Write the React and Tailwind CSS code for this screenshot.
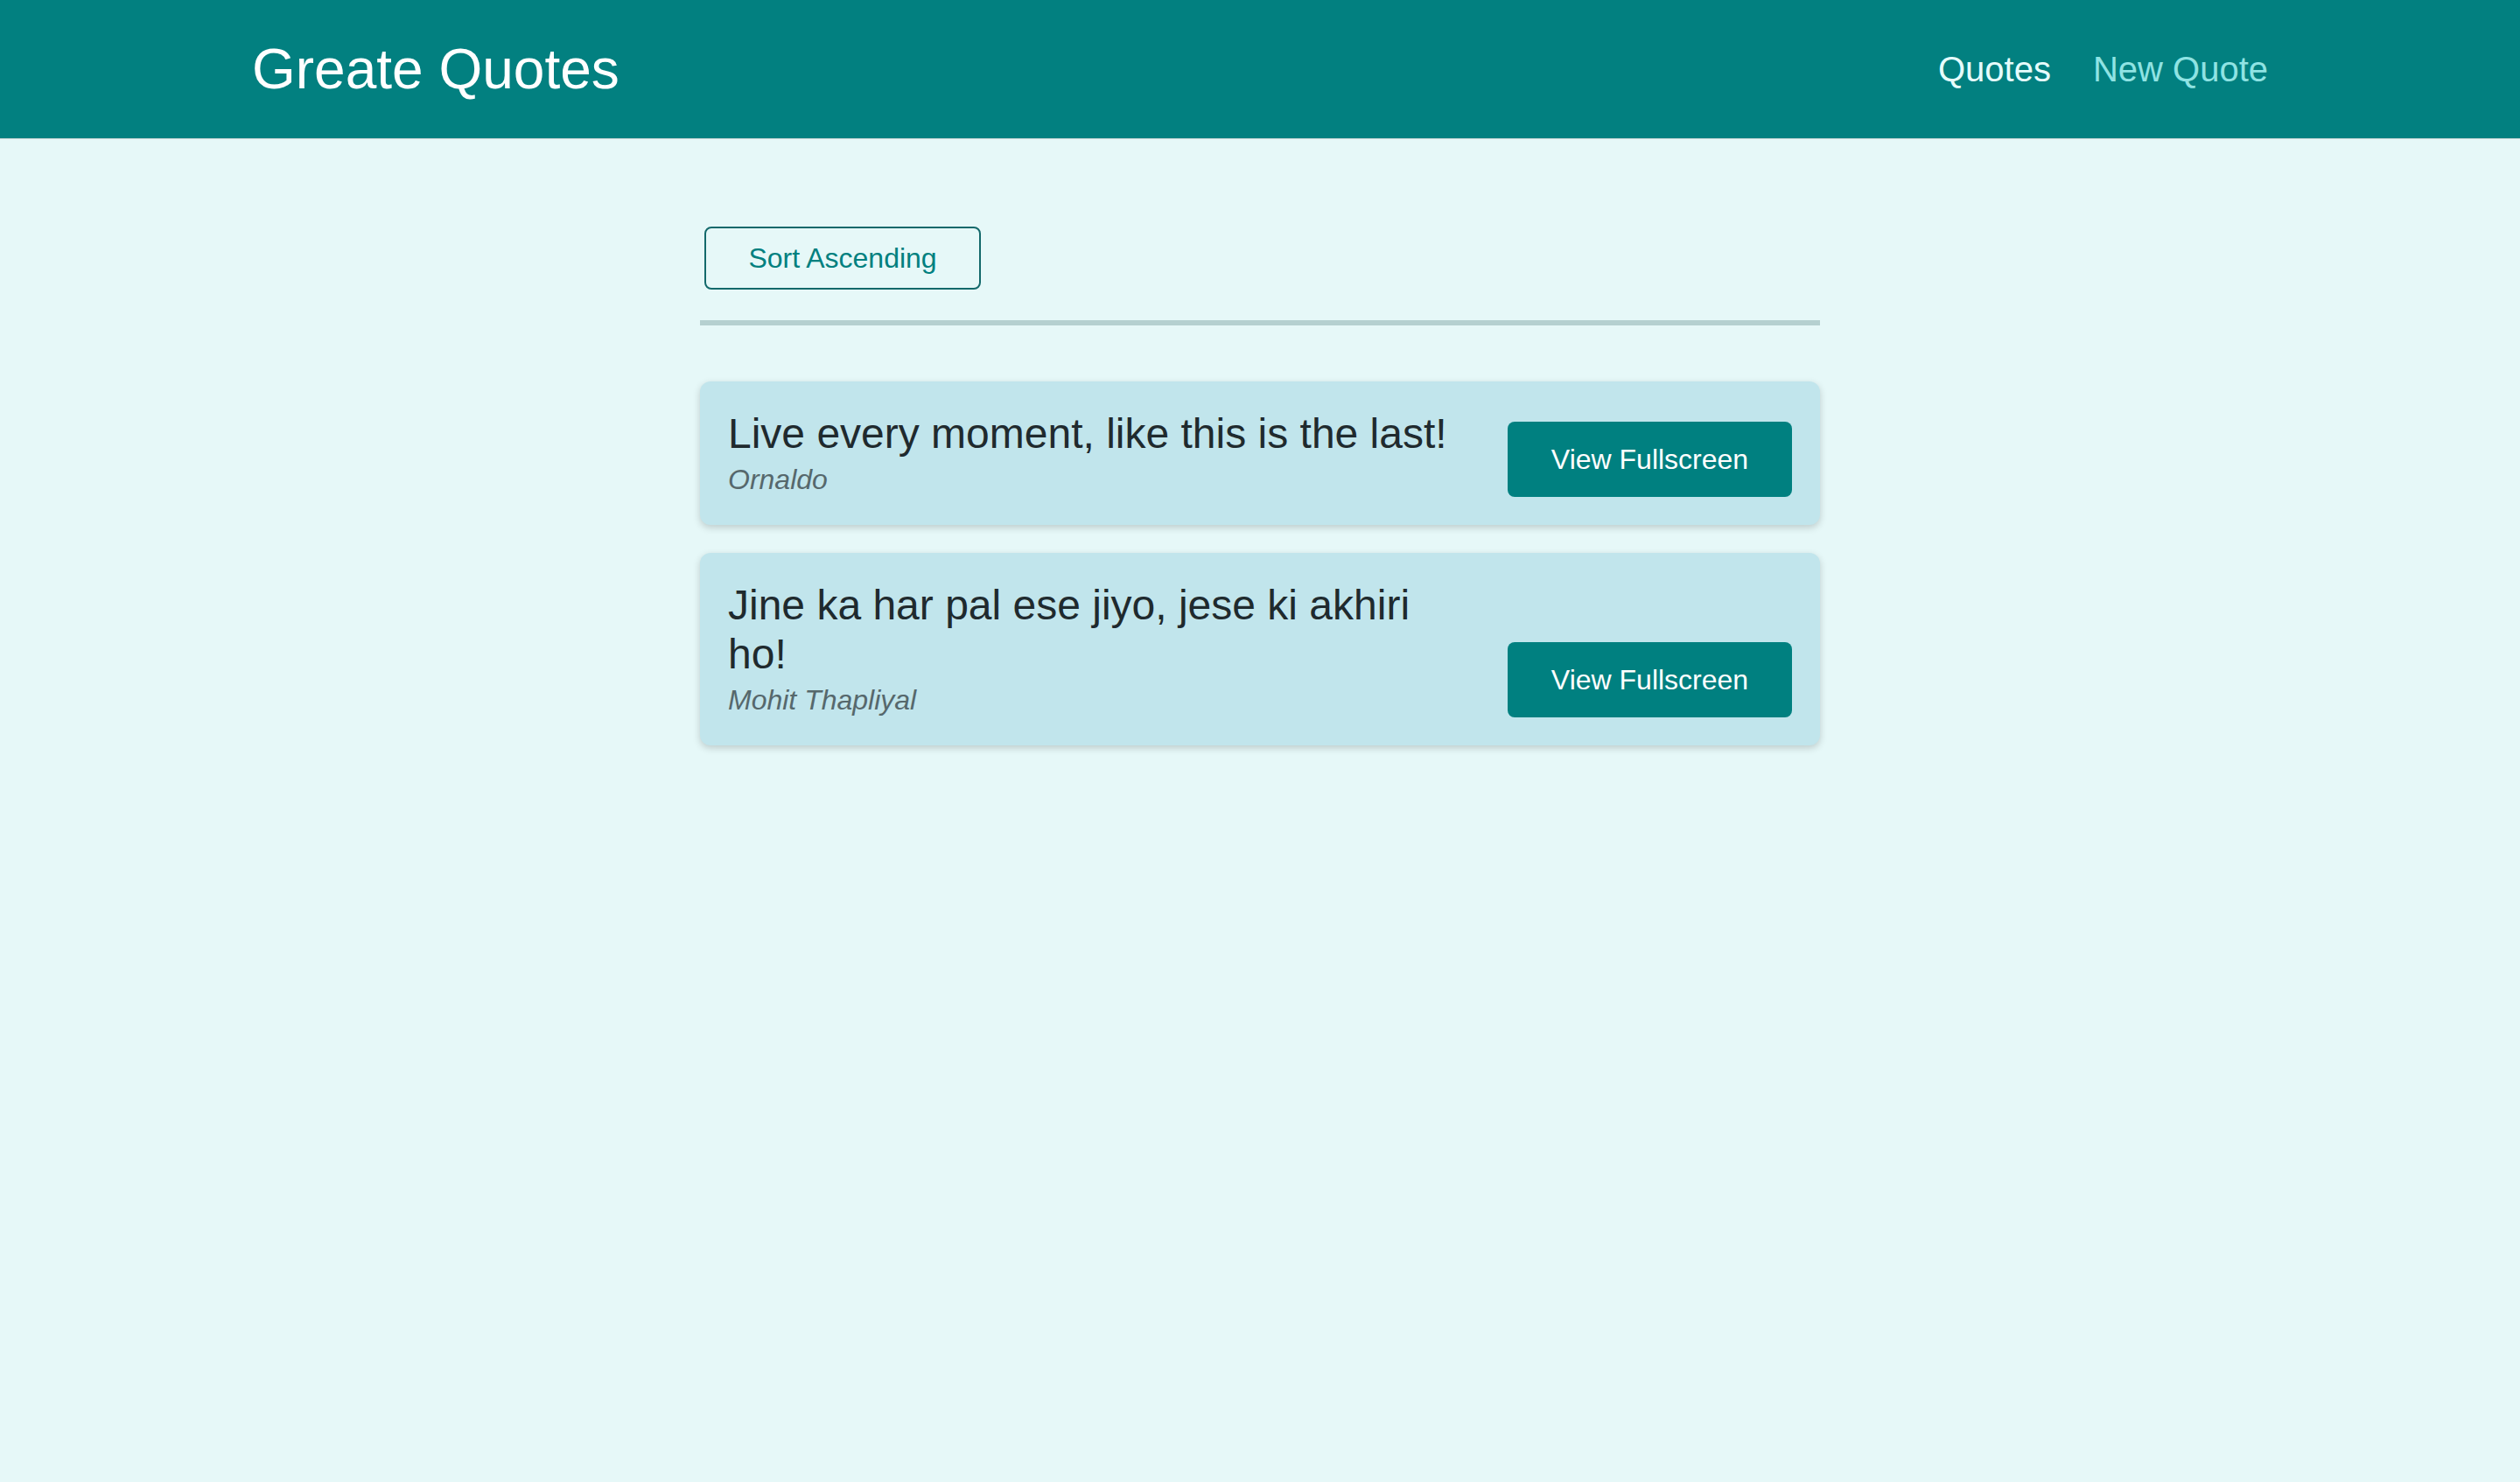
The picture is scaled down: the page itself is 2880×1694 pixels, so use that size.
import { useState } from 'react';

const quotesData = [
  { id: 'q1', text: 'Live every moment, like this is the last!', author: 'Ornaldo' },
  { id: 'q2', text: 'Jine ka har pal ese jiyo, jese ki akhiri ho!', author: 'Mohit Thapliyal' },
];

function QuoteItem({ quote }) {
  return (
    <li className="flex items-end gap-10 rounded-xl bg-[#c1e5ec] p-8 shadow-[0_3px_8px_rgba(0,0,0,0.18)]">
      <figure className="flex-1 min-w-0">
        <blockquote className="text-[48px] leading-[56px] text-[#1f2a2e]">{quote.text}</blockquote>
        <figcaption className="mt-[4px] text-[32px] leading-[40px] italic text-[#56686c]">{quote.author}</figcaption>
      </figure>
      <button className="shrink-0 w-[325px] h-[86px] rounded-lg bg-[#008080] text-[32px] text-white">
        View Fullscreen
      </button>
    </li>
  );
}

export default function App() {
  const [asc, setAsc] = useState(true);
  const list = [...quotesData];

  return (
    <div className="min-h-[1694px] bg-[#e6f8f8] font-['Liberation_Sans',Arial,sans-serif]">
      {/* Header */}
      <header className="flex items-center justify-between h-[158px] px-[288px] bg-[#028080] shadow-[0_1px_0_rgba(0,0,0,0.15)]">
        <div className="text-[64px] text-white">Greate Quotes</div>
        <nav className="flex gap-12 text-[40px]">
          <a className="text-[#e6fcfc]">Quotes</a>
          <a className="text-[#8fe3e3]">New Quote</a>
        </nav>
      </header>

      <main className="w-[1280px] mx-auto pt-[101px]">
        <div className="px-[5px] pb-[35px] border-b-[6px] border-[#b5d0d0]">
          <button
            onClick={() => setAsc(!asc)}
            className="w-[316px] h-[72px] rounded-lg border-2 border-[#13696b] text-[32px] text-[#00807f]"
          >
            Sort {asc ? 'Ascending' : 'Descending'}
          </button>
        </div>

        <ul className="mt-16 flex flex-col gap-8">
          {list.map(q => <QuoteItem key={q.id} quote={q} />)}
        </ul>
      </main>
    </div>
  );
}
